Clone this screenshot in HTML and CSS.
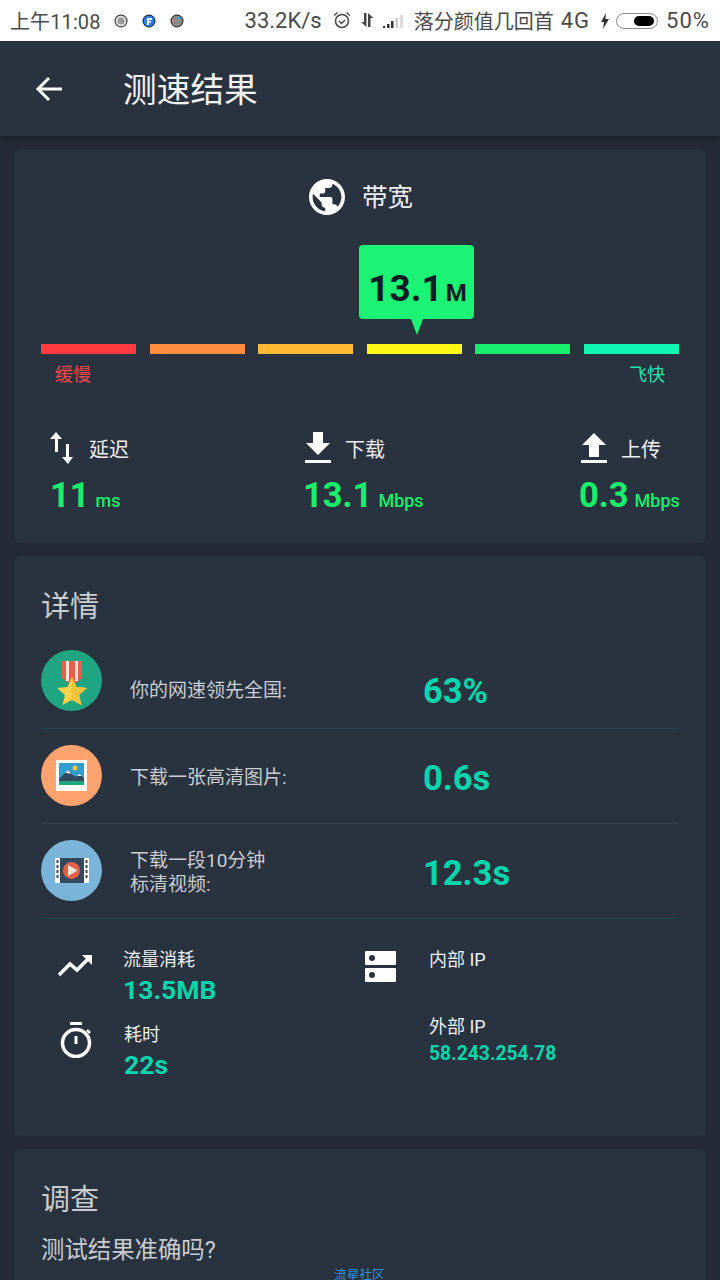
FILE: index.html
```html
<!DOCTYPE html>
<html lang="en">
<head>
    <meta charset="UTF-8">
    <title>测速结果</title>
    <link rel="stylesheet" href="styles.css">
</head>
<body>
<div class="status">
    <span class="s-time">上午11:08</span>
    <svg class="s-dot first" viewBox="0 0 14 14"><circle cx="7" cy="7" r="6.500" fill="#222"/><circle cx="7" cy="7" r="5.500" fill="#ddd"/><circle cx="7" cy="7" r="3.500" fill="#999"/></svg>
    <svg class="s-dot" viewBox="0 0 14 14"><circle cx="7" cy="7" r="6.500" fill="#123"/><circle cx="7" cy="7" r="5.500" fill="#2f7bf0"/><path d="M5 4h5v2H7v1h2v1.500H7V11H5z" fill="#fff"/></svg>
    <svg class="s-dot" viewBox="0 0 14 14"><circle cx="7" cy="7" r="6.500" fill="#222"/><circle cx="7" cy="7" r="5.500" fill="#8a8a8a"/><circle cx="9" cy="4" r="1.500" fill="#3aa0e0"/><circle cx="3.500" cy="7" r="1.200" fill="#e77"/></svg>
    <span class="s-speed">33.2K/s</span>
    <svg class="s-alarm" viewBox="0 0 18 18" fill="none" stroke="#444" stroke-width="1.500"><circle cx="9" cy="10" r="6.500"/><path d="M6 10l2.500 2.500L12 9M1 4.500L4.500 1.500M17 4.500L13.500 1.500"/></svg>
    <svg class="s-arrows" viewBox="0 0 14 16" fill="#444"><path d="M4 1h2.500v14L1 10h3zM8 15V1l5.500 5H10.500v9z"/></svg>
    <svg class="s-signal" viewBox="0 0 21 14"><path d="M0 12h2v2H0z" fill="#333"/><path d="M4 10h2.500v4H4z" fill="#333"/><path d="M8 7h2.500v7H8z" fill="#333"/><path d="M12.500 4H15v10h-2.500z" fill="#ccc"/><path d="M17 1h3v13h-3z" fill="#ddd"/></svg>
    <span class="s-carrier">落分颜值几回首</span>
    <span class="s-net">4G</span>
    <svg class="s-bolt" viewBox="0 0 10 16" fill="#333"><path d="M6 0L1 9h3l-1 7 6-10H5.500z"/></svg>
    <span class="s-batt"><i></i></span>
    <span class="s-pct">50%</span>
</div>

<div class="head">
    <svg class="back" viewBox="0 0 28 26" fill="none" stroke="#fff" stroke-width="3"><path d="M27 13H3M14 2L3 13l11 11"/></svg>
    <span class="head-title">测速结果</span>
</div>

<div class="card card-speed">
    <div class="band">
        <svg class="globe" viewBox="2 2 20 20"><path fill="#fff" d="M12 2C6.480 2 2 6.480 2 12s4.480 10 10 10 10-4.480 10-10S17.520 2 12 2zm-1 17.930c-3.950-.490-7-3.850-7-7.930 0-.620.080-1.210.210-1.790L9 15v1c0 1.100.900 2 2 2v1.930zm6.900-2.540c-.260-.810-1-1.390-1.900-1.390h-1v-3c0-.550-.450-1-1-1H8v-2h2c.550 0 1-.450 1-1V7h2c1.100 0 2-.900 2-2v-.410c2.930 1.190 5 4.060 5 7.410 0 2.080-.800 3.970-2.100 5.390z"/></svg>
        <span>带宽</span>
    </div>
    <div class="gauge">
        <div class="bubble"><b>13.1</b><em>M</em></div>
        <div class="seg seg1"></div>
        <div class="seg seg2"></div>
        <div class="seg seg3"></div>
        <div class="seg seg4"></div>
        <div class="seg seg5"></div>
        <div class="seg seg6"></div>
    </div>
    <div class="gauge-text">
        <span class="slow">缓慢</span>
        <span class="fast">飞快</span>
    </div>
    <div class="stats">
        <div class="stat">
            <div class="stat-top">
                <svg class="stat-ico" viewBox="0 0 26 32" fill="#fff"><path d="M7 0l6 7H9v13H6V7H1z"/><path d="M19 32l-6-7h4V12h3v13h4z"/></svg>
                <span>延迟</span>
            </div>
            <div class="stat-num"><b>11</b><em>ms</em></div>
        </div>
        <div class="stat">
            <div class="stat-top">
                <svg class="stat-ico" viewBox="0 0 26 32" fill="#fff"><path d="M8 0h10v11h7L13 23 1 11h7z"/><path d="M0 28h26v3H0z"/></svg>
                <span>下载</span>
            </div>
            <div class="stat-num"><b>13.1</b><em>Mbps</em></div>
        </div>
        <div class="stat">
            <div class="stat-top">
                <svg class="stat-ico" viewBox="0 0 26 32" fill="#fff"><path d="M8 25h10V13h7L13 1 1 13h7z"/><path d="M0 28h26v3H0z"/></svg>
                <span>上传</span>
            </div>
            <div class="stat-num"><b>0.3</b><em>Mbps</em></div>
        </div>
    </div>
</div>

<div class="card card-info">
    <div class="card-title">详情</div>
    <div class="row row-first">
        <svg class="row-ico" viewBox="0 0 61 61">
            <circle cx="30.500" cy="30.500" r="30.500" fill="#20a582"/>
            <path d="M21 11h20v17l-10 8-10-8z" fill="#e8604c"/>
            <path d="M25 11h3v20h-3zM34 11h3v20h-3z" fill="#f4e8dc"/>
            <path d="M31 27l4.500 10 10.500 1-8 7 2.500 10L31 50l-9.500 5L24 45l-8-7 10.500-1z" fill="#fcd34d"/>
            <path d="M31 27v23l9.500 5L38 45l8-7-10.500-1z" fill="#f3c33c"/>
        </svg>
        <div class="row-text">你的网速领先全国:</div>
        <div class="row-val">63%</div>
    </div>
    <div class="row row-mid">
        <svg class="row-ico" viewBox="0 0 61 61">
            <circle cx="30.500" cy="30.500" r="30.500" fill="#fea26e"/>
            <path d="M15 15h31v31H15z" fill="#fff"/>
            <path d="M18 18h25v22H18z" fill="#2e9fd0"/>
            <circle cx="34" cy="23" r="2.500" fill="#f4c430"/>
            <path d="M18 34l9-9 7 7 4-3 5 4v3H18z" fill="#35495e"/>
            <path d="M24 28l3-3 3 4-3-1zM36 31l2-2 3 2-2 0z" fill="#fff"/>
            <path d="M18 36h25v4H18z" fill="#1fa580"/>
        </svg>
        <div class="row-text">下载一张高清图片:</div>
        <div class="row-val">0.6s</div>
    </div>
    <div class="row">
        <svg class="row-ico" viewBox="0 0 61 61">
            <circle cx="30.500" cy="30.500" r="30.500" fill="#7ab4d8"/>
            <path d="M18 18h26v25H18z" fill="#35495e"/>
            <path d="M14 18h5v25h-5zM43 18h5v25h-5z" fill="#fff"/>
            <path d="M15.500 20h2v3h-2zM15.500 25h2v3h-2zM15.500 30h2v3h-2zM15.500 35h2v3h-2zM44.500 20h2v3h-2zM44.500 25h2v3h-2zM44.500 30h2v3h-2zM44.500 35h2v3h-2z" fill="#35495e"/>
            <circle cx="30.500" cy="30.500" r="8.500" fill="#e8604c"/>
            <path d="M27 25l9.500 5.500L27 36z" fill="#f0e6dc"/>
        </svg>
        <div class="row-text">下载一段10分钟<br>标清视频:</div>
        <div class="row-val">12.3s</div>
    </div>
    <div class="extra">
        <div class="extra-col">
            <div class="item">
                <svg class="item-ico" viewBox="0 0 36 24" fill="none" stroke="#fff" stroke-width="3.500"><path d="M1 22l11-11 7 6 13-13"/><path d="M24 2h10v10z" fill="#fff" stroke="none"/></svg>
                <div>
                    <div class="item-name">流量消耗</div>
                    <div class="item-val">13.5MB</div>
                </div>
            </div>
            <div class="item item-time">
                <svg class="item-ico clock" viewBox="0 0 34 36" fill="none" stroke="#fff"><path d="M11 1.500h12" stroke-width="3"/><circle cx="17" cy="21" r="13.500" stroke-width="3.500"/><path d="M17 14v8" stroke-width="3"/><path d="M28 8l3 3" stroke-width="2.500"/></svg>
                <div>
                    <div class="item-name">耗时</div>
                    <div class="item-val">22s</div>
                </div>
            </div>
        </div>
        <div class="extra-col">
            <div class="item item-ip">
                <svg class="item-ico server" viewBox="0 0 31 31"><path d="M1 0h29a1 1 0 0 1 1 1v12a1 1 0 0 1-1 1H1a1 1 0 0 1-1-1V1a1 1 0 0 1 1-1zM1 17h29a1 1 0 0 1 1 1v12a1 1 0 0 1-1 1H1a1 1 0 0 1-1-1V18a1 1 0 0 1 1-1z" fill="#fff"/><circle cx="7" cy="7" r="3" fill="#29323f"/><circle cx="7" cy="24" r="3" fill="#29323f"/></svg>
                <div class="item-name">内部 IP</div>
            </div>
            <div class="outer">
                <div class="item-name">外部 IP</div>
                <div class="ip-val">58.243.254.78</div>
            </div>
        </div>
    </div>
</div>

<div class="card card-poll">
    <div class="card-title">调查</div>
    <div class="poll-q">测试结果准确吗?</div>
</div>

<div class="mark">流星社区</div>
</body>
</html>
```

FILE: styles.css
```css
html,body{
    width: 100%;
    height: 100%;
    overflow: hidden;
}
*{
    margin:0;
    padding:0;
    box-sizing: border-box;
}
body{
    background: #232a35;
    font-family: Roboto,"Noto Sans CJK SC",sans-serif;
    position: relative;
}
em{
    font-style: normal;
}

/* status bar */
.status{
    height: 41px;
    background: #fff;
    color: #4a4a4a;
    font-size: 20px;
    display: flex;
    align-items: center;
    padding-left: 10px;
}
.s-time{
    letter-spacing: .1px;
}
.s-dot{
    width: 14px;
    height: 14px;
    margin-left: 14px;
}
.s-dot.first{
    margin-left: 13px;
}
.s-speed{
    margin-left: 61px;
    font-size: 22px;
}
.s-alarm{
    width: 18px;
    height: 18px;
    margin-left: 11px;
    margin-top: -2px;
}
.s-arrows{
    width: 14px;
    height: 16px;
    margin-left: 9px;
    margin-top: -2px;
}
.s-signal{
    width: 21px;
    height: 14px;
    margin-left: 9px;
    margin-top: 1px;
}
.s-carrier{
    margin-left: 10px;
}
.s-net{
    margin-left: 7px;
    font-size: 22px;
    letter-spacing: 1px;
}
.s-bolt{
    width: 10px;
    height: 16px;
    margin-left: 10px;
}
.s-batt{
    width: 42px;
    height: 16px;
    margin-left: 6px;
    border: 1.500px solid #8a8a8a;
    border-radius: 8px;
    padding: 2px 3px;
    display: flex;
    justify-content: flex-end;
}
.s-batt i{
    display: block;
    width: 20px;
    background: #000;
    border-radius: 5px;
}
.s-pct{
    margin-left: 8px;
    font-size: 22px;
    letter-spacing: 1px;
}

/* header */
.head{
    height: 95px;
    background: #29323f;
    box-shadow: 0 4px 4px rgba(0,0,0,.2);
    display: flex;
    align-items: center;
    padding-left: 35px;
    margin-bottom: 14px;
}
.back{
    width: 28px;
    height: 26px;
}
.head-title{
    margin-left: 60px;
    margin-top: -2px;
    font-size: 33.700px;
    color: #f2f3f4;
}

/* cards */
.card{
    width: 692px;
    margin: 0 14px 13px;
    background: #29323f;
    border-radius: 6px;
    padding-left: 27px;
    padding-right: 27px;
}
.card-speed{
    height: 393px;
    padding-top: 29px;
}
.band{
    display: flex;
    align-items: center;
    padding-left: 268px;
    height: 36px;
    color: #eceef0;
    font-size: 25.500px;
}
.band span{
    margin-top: -6px;
}
.globe{
    width: 36px;
    height: 36px;
    margin-right: 17px;
}
.gauge{
    margin-top: 129px;
    display: grid;
    grid-template-columns: repeat(6,1fr);
    gap: 13.600px;
    position: relative;
}
.seg{
    height: 10px;
}
.seg1{background: #ff3b3f;}
.seg2{background: #ff8f3f;}
.seg3{background: #ffb932;}
.seg4{background: #fff714;}
.seg5{background: #17ee6b;}
.seg6{background: #12f5b0;}
.bubble{
    position: absolute;
    left: 318px;
    top: -99px;
    width: 115px;
    height: 74px;
    padding-left: 2px;
    background: #1cf274;
    border-radius: 4px;
    color: #0b1c26;
    display: flex;
    align-items: baseline;
    justify-content: center;
    line-height: 87px;
}
.bubble:after{
    content: "";
    position: absolute;
    left: 52px;
    top: 74px;
    border-left: 6px solid transparent;
    border-right: 6px solid transparent;
    border-top: 16px solid #1cf274;
}
.bubble b{
    font-size: 37px;
}
.bubble em{
    font-size: 24px;
    font-weight: 700;
    margin-left: 3px;
}
.gauge-text{
    display: flex;
    justify-content: space-between;
    padding: 9px 14px 0;
    font-size: 18px;
    line-height: 24px;
}
.slow{color: #f0484c;}
.fast{color: #1ee3ae;}
.stats{
    margin-top: 44px;
    display: grid;
    grid-template-columns: 253px 276px auto;
    padding-left: 8px;
}
.stat-top{
    display: flex;
    align-items: center;
    height: 34px;
    color: #eceef0;
    font-size: 20px;
}
.stat-ico{
    width: 26px;
    height: 32px;
    margin-right: 14px;
}
.stat + .stat .stat-ico{
    margin-left: 3px;
}
.stat-num{
    color: #17ee6b;
    margin-top: 8px;
    line-height: 44px;
    padding-left: 1px;
}
.stat-num b{
    font-size: 34.500px;
    font-weight: 700;
}
.stat-num em{
    font-size: 18px;
    font-weight: 500;
    margin-left: 6px;
}

.card-info{
    height: 580px;
    padding-top: 31px;
}
.card-title{
    font-size: 29px;
    line-height: 40px;
    color: #c9ccd1;
}
.row{
    height: 95px;
    padding-top: 16px;
    padding-bottom: 16px;
    border-bottom: 1px solid #1d4a52;
    display: flex;
    align-items: center;
}
.row-first{
    margin-top: 7px;
}
.row-mid{
    border-bottom-color: #36424f;
}
.row-ico{
    width: 61px;
    height: 61px;
    align-self: flex-start;
    flex: none;
}
.row-text{
    width: 293px;
    margin-left: 28px;
    margin-top: 3px;
    font-size: 19px;
    line-height: 24px;
    color: #c9ccd1;
}
.row-first .row-text{
    margin-top: 20px;
}
.row-val{
    margin-top: 3px;
    font-size: 34.500px;
    font-weight: 700;
    color: #06d6ae;
}
.row-first .row-val{
    margin-top: 20px;
}
.extra{
    display: grid;
    grid-template-columns: 323px auto;
    padding-top: 29px;
    color: #eceef0;
}
.item{
    display: flex;
}
.item-ico{
    width: 36px;
    height: 24px;
    margin: 5px 29px 0 17px;
    flex: none;
}
.clock{
    height: 36px;
    width: 34px;
    margin: -1px 31px 0 18px;
}
.item-time{
    margin-top: 15px;
}
.item-name{
    font-size: 18px;
    line-height: 24px;
}
.item-val{
    font-size: 26.500px;
    font-weight: 700;
    line-height: 36px;
    color: #06d6ae;
}
.server{
    width: 31px;
    height: 31px;
    margin: 3px 33px 0 1px;
}
.outer{
    margin-top: 33px;
    padding-left: 65px;
}
.ip-val{
    font-size: 19.300px;
    font-weight: 700;
    line-height: 30px;
    color: #06d6ae;
}

.card-poll{
    height: 140px;
    padding-top: 31px;
}
.poll-q{
    margin-top: 14px;
    font-size: 23.400px;
    line-height: 32px;
    color: #c9ccd1;
}
.mark{
    position: absolute;
    left: 334px;
    top: 1267px;
    font-size: 12.700px;
    line-height: 16px;
    color: #2f8fd8;
}
```
